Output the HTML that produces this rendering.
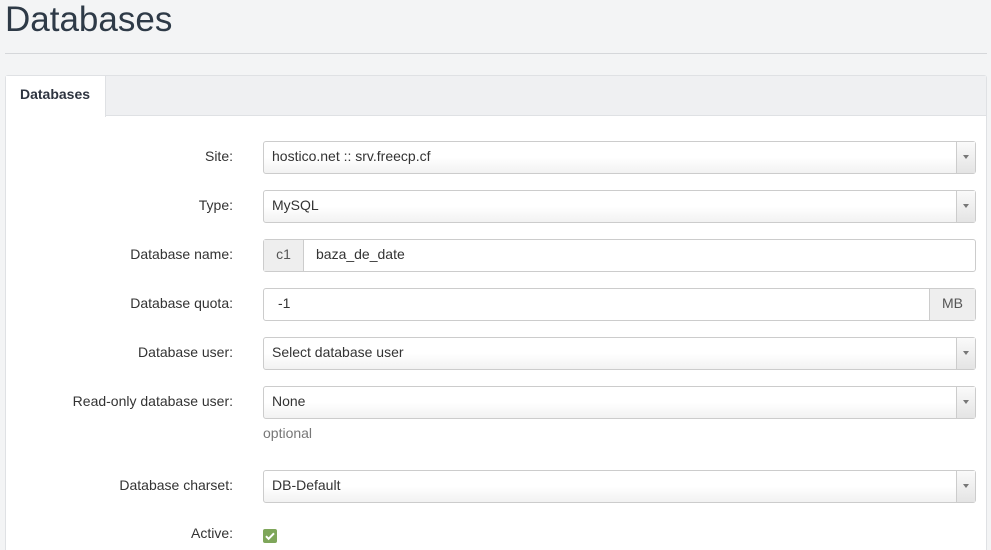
<!DOCTYPE html>
<html style="width:991px;height:550px;overflow:hidden"><head><style>
*{box-sizing:border-box}
body{margin:0;width:991px;height:550px;overflow:hidden;position:relative;background:#f3f4f5;font-family:"Liberation Sans",sans-serif;font-size:14px;color:#333}
h1{position:absolute;left:5px;top:0;margin:0;font-weight:400;font-size:35px;line-height:40px;color:#2e3a47}
.hr{position:absolute;left:5px;right:4px;top:53px;border-top:1px solid #d5d7da}
.panel{position:absolute;left:5px;top:75px;width:982px;height:500px;background:#fff;border:1px solid #dfe1e4;border-radius:3px}
.tabbar{position:absolute;left:0;top:0;right:0;height:40px;background:#eff0f2;border-bottom:1px solid #dfe1e4}
.tab{position:absolute;left:0;top:0;width:100px;height:41px;background:#fff;border-right:1px solid #dfe1e4;font-weight:700;font-size:14px;line-height:37px;padding-left:14px;color:#2e3440}
.lbl{position:absolute;right:758px;width:240px;text-align:right;font-size:14px;color:#333;line-height:31px}
.sel{position:absolute;left:263px;width:713px;height:33px;border:1px solid #ccc;border-radius:3px;background:linear-gradient(#fff 50%,#f2f2f2);padding-left:8px;line-height:29px;color:#333}
.sel::after{content:"";position:absolute;right:0;top:0;width:18px;height:31px;border-left:1px solid #ccc;background:linear-gradient(#fafafa,#e4e4e4)}
.sel::before{content:"";position:absolute;right:6px;top:13px;border:3px solid transparent;border-top:4px solid #777;z-index:1}
.inp{position:absolute;left:263px;width:713px;height:33px;border:1px solid #ccc;border-radius:3px;background:#fff;line-height:29px;color:#333}
.add{position:absolute;top:0;bottom:0;background:#eee;color:#555;text-align:center}
</style></head><body>
<h1>Databases</h1><div class="hr"></div>
<div class="panel"><div class="tabbar"></div><div class="tab">Databases</div></div>
<div class="lbl" style="top:141px">Site:</div><div class="sel" style="top:141px">hostico.net :: srv.freecp.cf</div>
<div class="lbl" style="top:190px">Type:</div><div class="sel" style="top:190px">MySQL</div>
<div class="lbl" style="top:239px">Database name:</div><div class="inp" style="top:239px"><div class="add" style="left:0;width:40px;border-right:1px solid #ccc">c1</div><span style="position:absolute;left:52px">baza_de_date</span></div>
<div class="lbl" style="top:288px">Database quota:</div><div class="inp" style="top:288px"><span style="position:absolute;left:14px">-1</span><div class="add" style="right:0;width:46px;border-left:1px solid #ccc">MB</div></div>
<div class="lbl" style="top:337px">Database user:</div><div class="sel" style="top:337px">Select database user</div>
<div class="lbl" style="top:386px">Read-only database user:</div><div class="sel" style="top:386px">None</div>
<div style="position:absolute;left:263px;top:425px;color:#777;font-size:14px">optional</div>
<div class="lbl" style="top:470px">Database charset:</div><div class="sel" style="top:470px">DB-Default</div>
<div class="lbl" style="top:518px">Active:</div>
<div style="position:absolute;left:263px;top:529px;width:14px;height:14px;background:#7ea65a;border-radius:2px"><svg width="14" height="14" viewBox="0 0 14 14"><path d="M3 7.2l2.6 2.6L11 4.3" stroke="#fff" stroke-width="2" fill="none"/></svg></div>
</body></html>
